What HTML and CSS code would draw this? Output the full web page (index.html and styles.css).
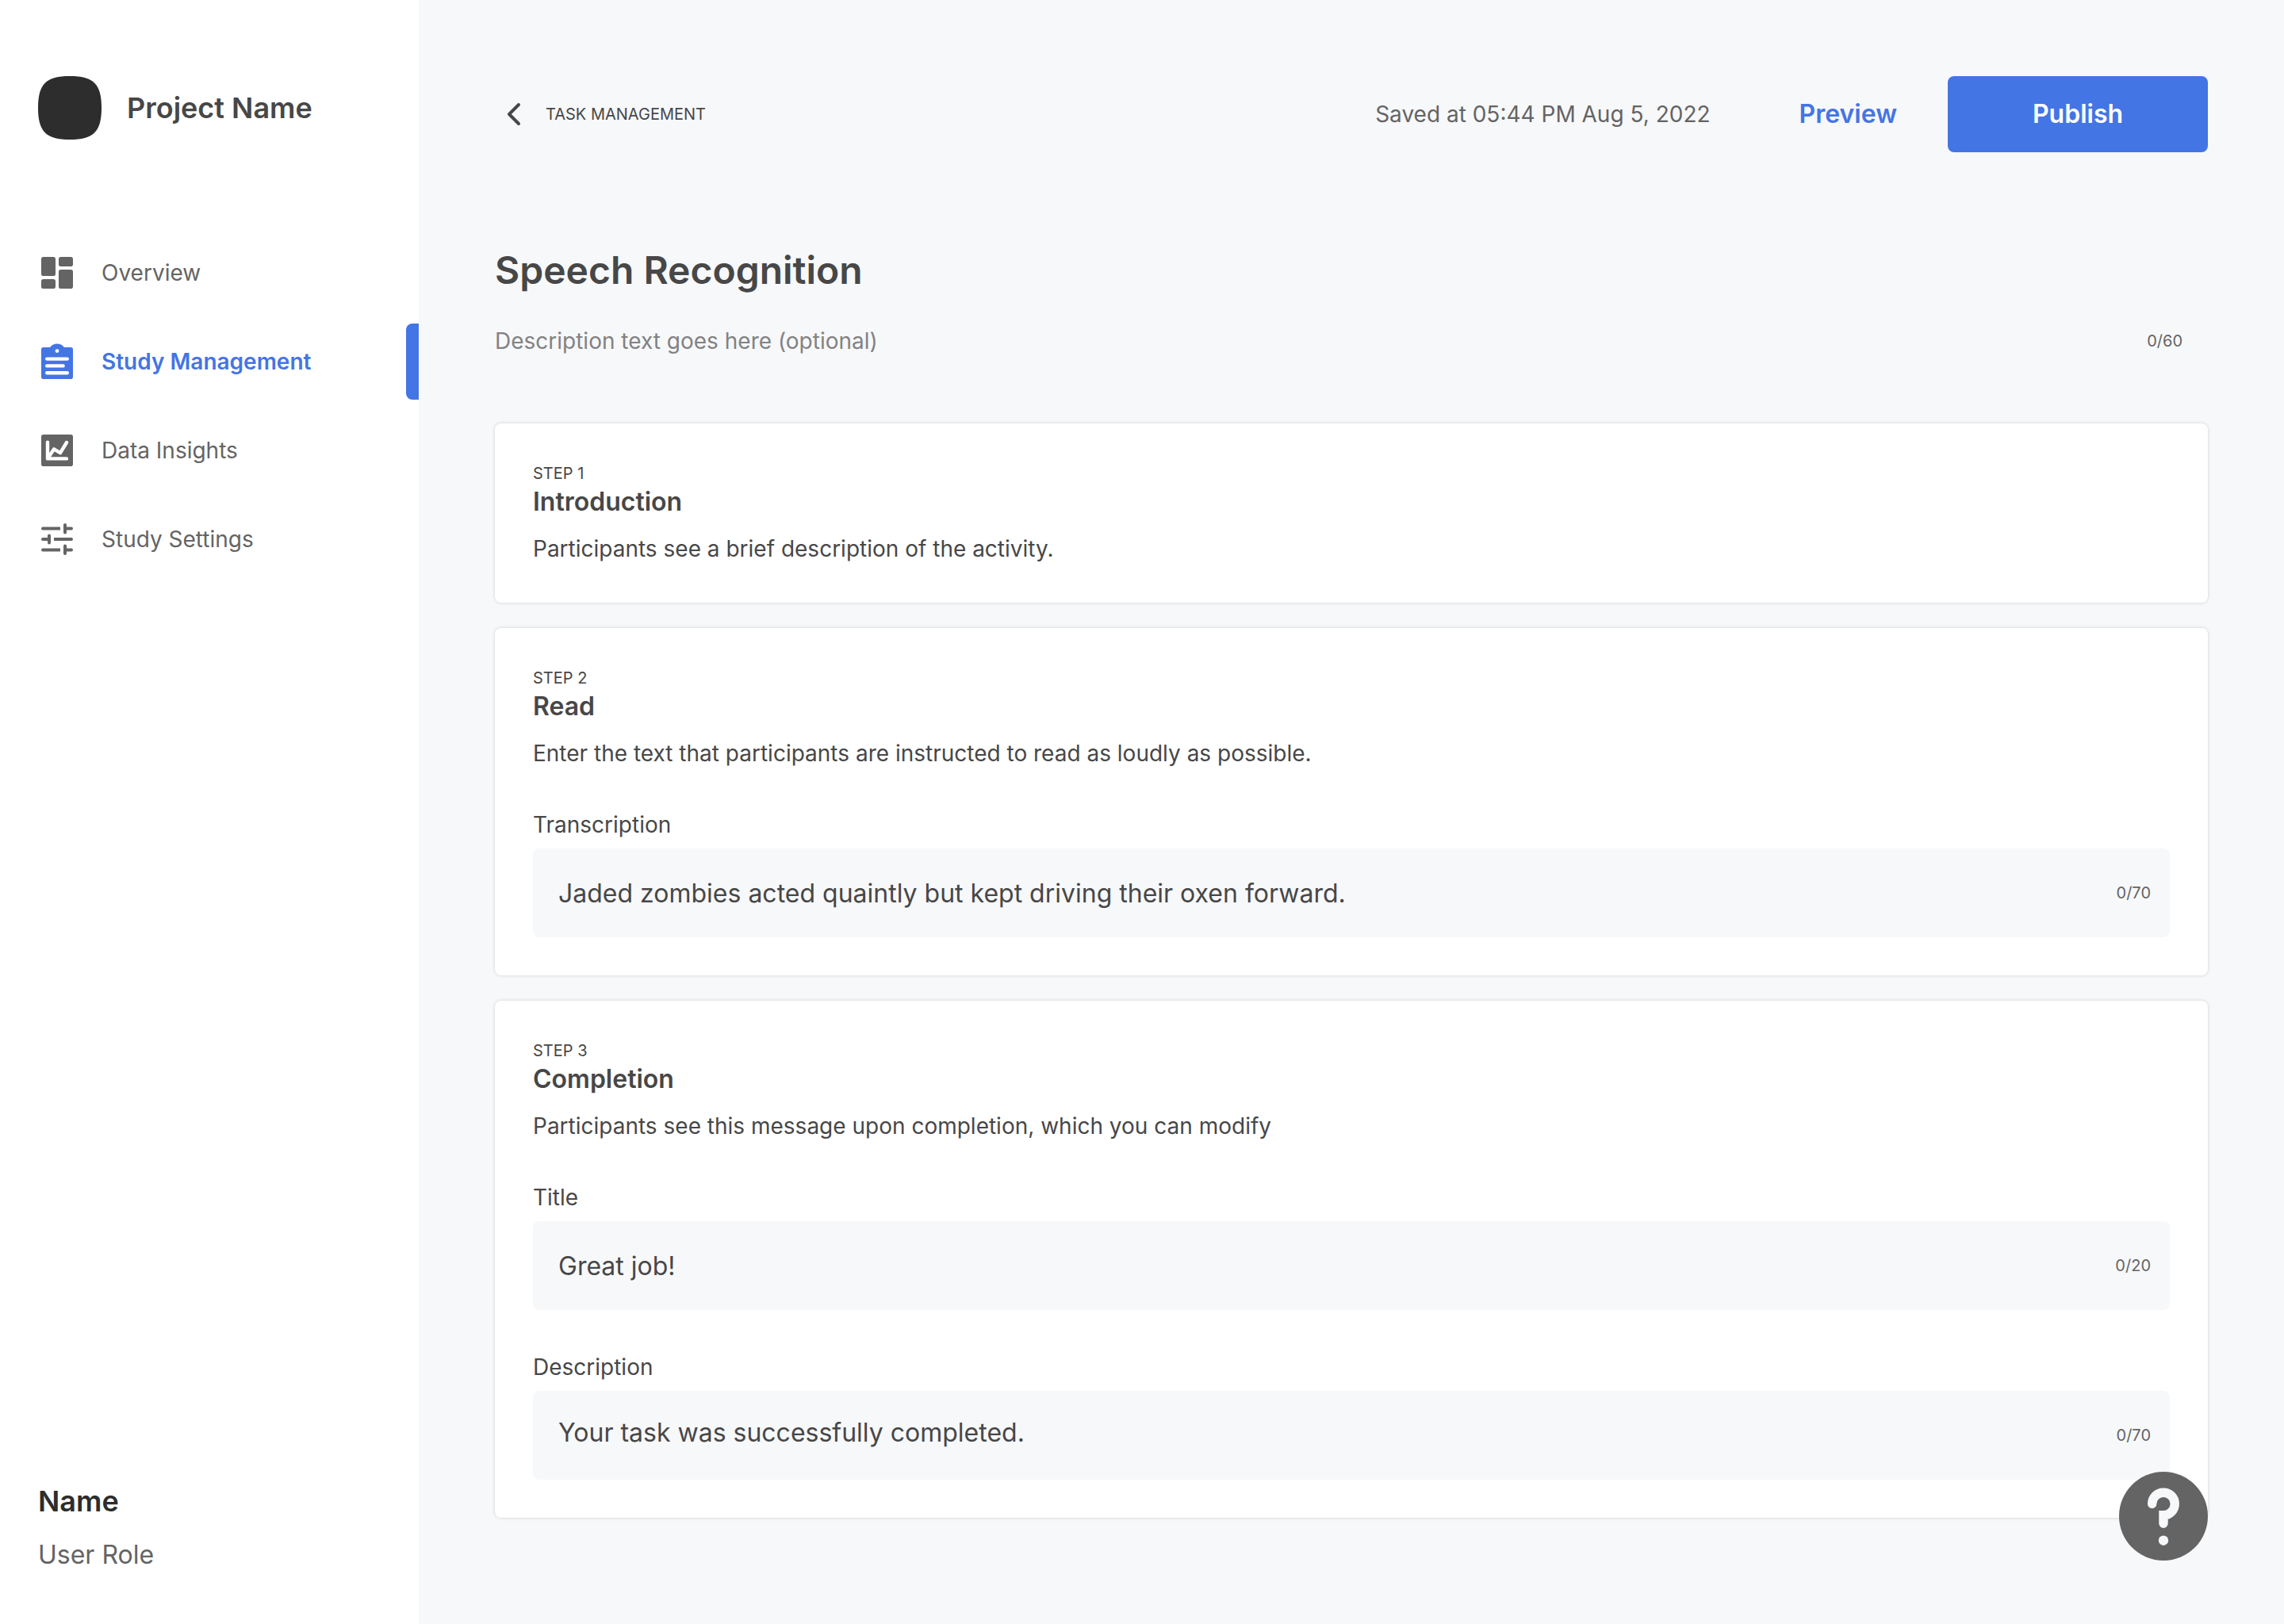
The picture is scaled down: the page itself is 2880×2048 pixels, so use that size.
FILE: index.html
```html
<!DOCTYPE html>
<html lang="en">
<head>
  <meta charset="utf-8">
  <meta name="viewport" content="width=device-width, initial-scale=1">
  <title>Speech Recognition – Task Management</title>
  <link rel="stylesheet" href="styles.css">
</head>
<body class="app">
  <aside class="sidebar">
    <div class="brand">
      <svg class="brand-mark" viewBox="0 0 80 80" aria-hidden="true"><path d="M0 40C0 10 10 0 40 0s40 10 40 40-10 40-40 40S0 70 0 40z"/></svg>
      <span class="brand-name">Project Name</span>
    </div>
    <nav class="nav" aria-label="Main">
      <a class="nav-link" href="#overview">
        <svg class="nav-icon" viewBox="0 0 24 24" aria-hidden="true"><rect x="2" y="2" width="9" height="12" rx="1.4"/><rect x="13" y="2" width="9" height="6" rx="1.4"/><rect x="2" y="16" width="9" height="6" rx="1.4"/><rect x="13" y="10" width="9" height="12" rx="1.4"/></svg>
        Overview
      </a>
      <a class="nav-link nav-link-active" href="#study" aria-current="page">
        <svg class="nav-icon" viewBox="0 0 24 24" aria-hidden="true"><path d="M3.4 3H7.6C8.5 1.7 10 .8 12 .8s3.5.9 4.4 2.2h4.2A1.4 1.4 0 0 1 22 4.4v17.200a1.4 1.4 0 0 1-1.400 1.400H3.400A1.400 1.400 0 0 1 2 21.600V4.400A1.400 1.400 0 0 1 3.400 3z"/><circle class="cut" cx="12" cy="5.300" r="1.200"/><path class="cut-line" d="M5.600 10.300h12.800M5.600 14.700h10.200M5.600 19.100h12.800"/></svg>
        Study Management
      </a>
      <a class="nav-link" href="#insights">
        <svg class="nav-icon" viewBox="0 0 24 24" aria-hidden="true"><rect x="2" y="2" width="20" height="20" rx="1.400"/><path class="cut-line" d="M6 6.800v10.400h12M6.400 16.600l3.600-5.400 4 2.400 4-6.600"/></svg>
        Data Insights
      </a>
      <a class="nav-link" href="#settings">
        <svg class="nav-icon" viewBox="0 0 24 24" aria-hidden="true"><path d="M3 4.300H14v2H3a1 1 0 0 1 0-2zM3 17.700H14v2H3a1 1 0 0 1 0-2zM21 11H10v2h11a1 1 0 0 0 0-2z"/><path class="line" d="M17 3v4.700M17 5.300h4M3 12h4M7 9.700v4.600M17 16.300v4.700M17 18.700h4"/></svg>
        Study Settings
      </a>
    </nav>
    <div class="user">
      <strong class="user-name">Name</strong>
      <span class="user-role">User Role</span>
    </div>
  </aside>

  <main class="main">
    <header class="toolbar">
      <a class="back" href="#tasks">
        <svg class="back-icon" viewBox="0 0 48 48" aria-hidden="true"><path d="M30 12 18 24l12 12"/></svg>
        TASK MANAGEMENT
      </a>
      <div class="actions">
        <span class="saved">Saved at 05:44 PM Aug 5, 2022</span>
        <button class="button button-text" type="button">Preview</button>
        <button class="button button-primary" type="button">Publish</button>
      </div>
    </header>

    <h1 class="title">Speech Recognition</h1>
    <div class="summary">
      <input class="summary-input" type="text" aria-label="Task description" placeholder="Description text goes here (optional)">
      <span class="counter">0/60</span>
    </div>

    <div class="steps">
      <section class="card">
        <p class="step">STEP 1</p>
        <h2 class="card-title">Introduction</h2>
        <p class="card-text">Participants see a brief description of the activity.</p>
      </section>

      <section class="card">
        <p class="step">STEP 2</p>
        <h2 class="card-title">Read</h2>
        <p class="card-text">Enter the text that participants are instructed to read as loudly as possible.</p>
        <div class="fields">
          <div class="field">
            <label class="label" for="transcription">Transcription</label>
            <div class="box">
              <input class="control" id="transcription" type="text" value="Jaded zombies acted quaintly but kept driving their oxen forward.">
              <span class="counter">0/70</span>
            </div>
          </div>
        </div>
      </section>

      <section class="card">
        <p class="step">STEP 3</p>
        <h2 class="card-title">Completion</h2>
        <p class="card-text">Participants see this message upon completion, which you can modify</p>
        <div class="fields">
          <div class="field">
            <label class="label" for="done-title">Title</label>
            <div class="box">
              <input class="control" id="done-title" type="text" value="Great job!">
              <span class="counter">0/20</span>
            </div>
          </div>
          <div class="field">
            <label class="label" for="done-text">Description</label>
            <div class="box">
              <textarea class="control control-area" id="done-text" rows="1">Your task was successfully completed.</textarea>
              <span class="counter">0/70</span>
            </div>
          </div>
        </div>
      </section>
    </div>
  </main>

  <button class="help" type="button" aria-label="Help">
    <svg class="help-icon" viewBox="0 0 112 112" aria-hidden="true"><path d="M41.700 40.500A14.300 14.300 0 1 1 56 54.800V65.200"/><circle cx="56" cy="86.700" r="6.200"/></svg>
  </button>
</body>
</html>
```

FILE: styles.css
```css
:root {
  --blue: #4475e4;
  --canvas: #f7f8fa;
  --ink: #474747;
  --ink-strong: #2d2d2d;
  --ink-soft: #646464;
  --ink-faint: #828282;
}

* {
  box-sizing: border-box;
}

body,
h1,
h2,
p {
  margin: 0;
}

button,
input,
textarea {
  margin: 0;
  padding: 0;
  border: 0;
  background: none;
  color: inherit;
  font: inherit;
}

a {
  color: inherit;
  text-decoration: none;
}

.app {
  display: grid;
  grid-template-columns: 528px minmax(0, 1fr);
  min-height: 100vh;
  background: var(--canvas);
  color: var(--ink);
  font: 400 28px/40px Inter, sans-serif;
}

/* Sidebar */
.sidebar {
  display: flex;
  flex-direction: column;
  padding: 96px 0 67px 48px;
  background: #fff;
}

.brand {
  display: flex;
  align-items: center;
  gap: 32px;
  margin-bottom: 120px;
}

.brand-mark {
  width: 80px;
  height: 80px;
  fill: var(--ink-strong);
}

.brand-name,
.user-name {
  font-size: 36px;
  font-weight: 600;
  line-height: 48px;
}

.nav {
  display: flex;
  flex-direction: column;
  gap: 16px;
}

.nav-link {
  display: flex;
  align-items: center;
  gap: 32px;
  height: 96px;
  color: var(--ink-soft);
}

.nav-link-active {
  color: var(--blue);
  font-weight: 600;
}

.nav-link-active::after {
  content: "";
  width: 16px;
  height: 96px;
  margin-left: auto;
  border-radius: 8px 0 0 8px;
  background: var(--blue);
}

.nav-icon {
  width: 48px;
  height: 48px;
  fill: currentColor;
}

.cut {
  fill: #fff;
}

.cut-line,
.line {
  fill: none;
  stroke: #fff;
  stroke-width: 2.2;
  stroke-linecap: round;
  stroke-linejoin: round;
}

.line {
  stroke: currentColor;
  stroke-width: 2;
}

.user {
  display: flex;
  flex-direction: column;
  gap: 24px;
  margin-top: auto;
}

.user-name {
  color: var(--ink-strong);
}

.user-role {
  color: var(--ink-soft);
  font-size: 32px;
}

/* Main column */
.main {
  padding: 96px 96px 80px;
}

.toolbar,
.actions,
.back,
.summary,
.box {
  display: flex;
  align-items: center;
}

.toolbar {
  justify-content: space-between;
  margin-bottom: 117px;
}

.back {
  gap: 16px;
  font-size: 20px;
}

.back-icon {
  width: 48px;
  height: 48px;
  fill: none;
  stroke: var(--ink);
  stroke-width: 4;
  stroke-linecap: round;
  stroke-linejoin: round;
}

.saved {
  margin-right: 48px;
  color: var(--ink-soft);
}

.button {
  height: 96px;
  border-radius: 8px;
  font-size: 32px;
  font-weight: 600;
}

.button-text {
  padding: 0 64px;
  color: var(--blue);
}

.button-primary {
  width: 328px;
  background: var(--blue);
  color: #fff;
}

.title {
  margin-bottom: 33px;
  font-size: 48px;
  font-weight: 600;
  line-height: 64px;
}

.summary {
  height: 48px;
  margin-bottom: 80px;
  padding-right: 32px;
}

.summary-input {
  flex: 1;
  height: 48px;
}

.summary-input::placeholder {
  color: var(--ink-faint);
  opacity: 1;
}

.counter {
  color: var(--ink-soft);
  font-size: 20px;
}

/* Step cards */
.steps {
  display: flex;
  flex-direction: column;
  gap: 32px;
}

.card {
  padding: 48px;
  border-radius: 8px;
  background: #fff;
  box-shadow: 0 0 4px rgba(0, 0, 0, 0.16);
}

.step {
  font-size: 20px;
  line-height: 31px;
}

.card-title {
  margin-bottom: 19px;
  font-size: 32px;
  font-weight: 600;
  line-height: 40px;
}

.fields {
  display: flex;
  flex-direction: column;
  gap: 52px;
  margin-top: 50px;
}

.field {
  display: flex;
  flex-direction: column;
  gap: 10px;
}

.box {
  height: 112px;
  padding: 0 24px 0 32px;
  border-radius: 8px;
  background: var(--canvas);
}

.control {
  flex: 1;
  height: 112px;
  font-size: 32px;
}

.control-area {
  padding: 33px 0;
  line-height: 40px;
  resize: none;
  overflow: hidden;
}

/* Floating help button */
.help {
  position: fixed;
  right: 96px;
  bottom: 80px;
  width: 112px;
  height: 112px;
  border-radius: 50%;
  background: var(--ink-soft);
}

.help-icon {
  display: block;
  fill: var(--canvas);
}

.help-icon path {
  fill: none;
  stroke: var(--canvas);
  stroke-width: 11.4;
  stroke-linecap: round;
}
```
